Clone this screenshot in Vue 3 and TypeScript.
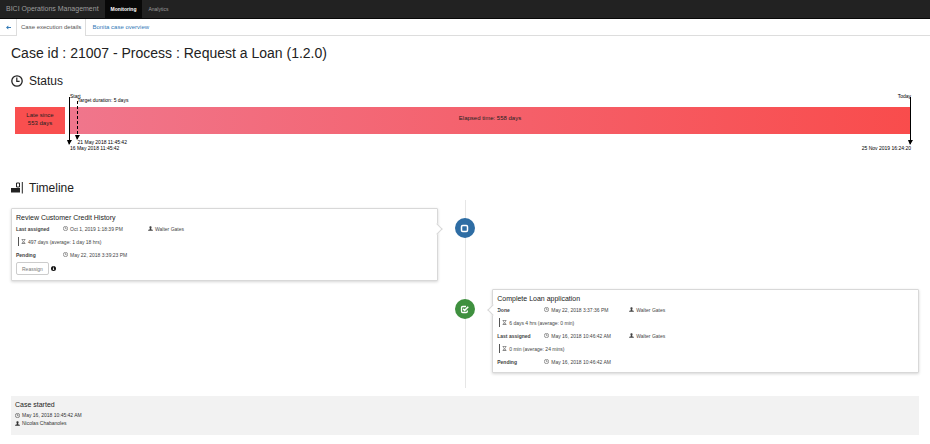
<script setup lang="ts">
import { h, type FunctionalComponent } from 'vue'

interface Step {
  label: string
  date: string
  user?: string
  duration?: string
}
interface Task {
  title: string
  side: 'left' | 'right'
  state: 'open' | 'done'
  steps: Step[]
}

const elapsedDays = 558
const targetDays = 5
const targetLeft = `${(targetDays / elapsedDays) * 100}%`

const tasks: Task[] = [
  {
    title: 'Review Customer Credit History',
    side: 'left',
    state: 'open',
    steps: [
      { label: 'Last assigned', date: 'Oct 1, 2019 1:18:39 PM', user: 'Walter Gates', duration: '497 days (average: 1 day 18 hrs)' },
      { label: 'Pending', date: 'May 22, 2018 3:39:23 PM' },
    ],
  },
  {
    title: 'Complete Loan application',
    side: 'right',
    state: 'done',
    steps: [
      { label: 'Done', date: 'May 22, 2018 3:37:36 PM', user: 'Walter Gates', duration: '6 days 4 hrs (average: 0 min)' },
      { label: 'Last assigned', date: 'May 16, 2018 10:46:42 AM', user: 'Walter Gates', duration: '0 min (average: 24 mins)' },
      { label: 'Pending', date: 'May 16, 2018 10:46:42 AM' },
    ],
  },
]

const ClockIcon: FunctionalComponent = () =>
  h('svg', { viewBox: '0 0 12 12', 'aria-hidden': 'true' }, [
    h('circle', { cx: 6, cy: 6, r: 5.2, fill: 'none', stroke: 'currentColor', 'stroke-width': 1.3 }),
    h('path', { d: 'M5.8 2.6V6.4H8.6', fill: 'none', stroke: 'currentColor', 'stroke-width': 1.2 }),
  ])

const UserIcon: FunctionalComponent = () =>
  h('svg', { viewBox: '0 0 12 12', 'aria-hidden': 'true' }, [
    h('path', {
      d: 'M6 .5C4.2.5 3.2 1.8 3.4 3.6 3.5 4.9 4 5.8 4.6 6.4V7.5L1.2 8.8Q.4 9.2.3 11.5H11.7Q11.6 9.2 10.8 8.8L7.4 7.5V6.4C8 5.8 8.5 4.9 8.6 3.6 8.8 1.8 7.8.5 6 .5Z',
      fill: 'currentColor',
    }),
  ])

const HourglassIcon: FunctionalComponent = () =>
  h('svg', { viewBox: '0 0 12 12', 'aria-hidden': 'true' }, [
    h('path', {
      d: 'M1.5 1H10.5M1.5 11H10.5M3 1C3 4 5.2 5 5.2 6S3 8 3 11M9 1C9 4 6.8 5 6.8 6S9 8 9 11M4 9.5H8',
      fill: 'none',
      stroke: 'currentColor',
      'stroke-width': 1.3,
    }),
  ])
</script>

<template>
  <div class="page">
    <header class="navbar">
      <a class="brand" href="#">BICI Operations Management</a>
      <nav class="menu">
        <a class="menu-item active" href="#">Monitoring</a>
        <a class="menu-item" href="#">Analytics</a>
      </nav>
    </header>

    <nav class="tabs">
      <a class="back" href="#" aria-label="Back">
        <svg viewBox="0 0 12 12" aria-hidden="true">
          <path d="M0 6L5.5 1V4.6H12V7.4H5.5V11Z" fill="currentColor" />
        </svg>
      </a>
      <a class="tab current" href="#">Case execution details</a>
      <a class="tab" href="#">Bonita case overview</a>
    </nav>

    <main class="content">
      <h1>Case id : 21007 - Process : Request a Loan (1.2.0)</h1>

      <h2><ClockIcon class="heading-icon" />Status</h2>
      <section class="chart">
        <div class="late"><span>Late since</span><span>553 days</span></div>
        <div class="elapsed">
          <span>Elapsed time: {{ elapsedDays }} days</span>
          <div class="marker start"><span class="above">Start</span><i class="arrow"></i><span class="below">16 May 2018 11:45:42</span></div>
          <div class="marker target" :style="{ left: targetLeft }"><span class="above">Target duration: 5 days</span><i class="arrow"></i><span class="below">21 May 2018 11:45:42</span></div>
          <div class="marker today"><span class="above">Today</span><i class="arrow"></i><span class="below">25 Nov 2019 16:24:20</span></div>
        </div>
      </section>

      <h2>
        <svg class="heading-icon" viewBox="0 0 12 12" aria-hidden="true">
          <path d="M0 6H9V10.5H0Z" fill="currentColor" />
          <path d="M5.5 1H8.5V5H5.5ZM11.3 0V11.5" fill="none" stroke="currentColor" stroke-width="1" />
        </svg>Timeline
      </h2>
      <section class="timeline">
        <div v-for="task in tasks" :key="task.title" class="entry" :class="task.side">
          <div class="badge" :class="task.state">
            <svg viewBox="0 0 12 12" aria-hidden="true">
              <rect v-if="task.state === 'open'" x="2" y="2" width="8" height="8" rx="1.6" fill="none" stroke="currentColor" stroke-width="2" />
              <template v-else>
                <path d="M8 2H3.6Q2 2 2 3.6V8.4Q2 10 3.6 10H8.2Q9.8 10 9.8 8.4V7.4" fill="none" stroke="currentColor" stroke-width="1.7" />
                <path d="M4.2 5.2L6.2 7.2L11 2.4" fill="none" stroke="currentColor" stroke-width="2" />
              </template>
            </svg>
          </div>
          <article class="card">
            <h3>{{ task.title }}</h3>
            <template v-for="step in task.steps" :key="step.label">
              <div class="step">
                <strong>{{ step.label }}</strong>
                <span class="with-icon"><ClockIcon class="icon" />{{ step.date }}</span>
                <span v-if="step.user" class="with-icon"><UserIcon class="icon" />{{ step.user }}</span>
              </div>
              <div v-if="step.duration" class="duration"><HourglassIcon class="icon" />{{ step.duration }}</div>
            </template>
            <div v-if="task.state === 'open'" class="actions">
              <button type="button">Reassign</button>
              <svg class="icon info" viewBox="0 0 12 12" aria-hidden="true">
                <circle cx="6" cy="6" r="6" fill="currentColor" />
                <path d="M5 2H7V3.6H5ZM4.4 4.8H7V8.6H7.8V9.8H4.4V8.6H5.2V6H4.4Z" fill="#fff" />
              </svg>
            </div>
          </article>
        </div>
      </section>

      <footer class="started">
        <h3>Case started</h3>
        <span class="with-icon"><ClockIcon class="icon" />May 16, 2018 10:45:42 AM</span>
        <span class="with-icon"><UserIcon class="icon" />Nicolas Chabanoles</span>
      </footer>
    </main>
  </div>
</template>

<style>
body {
  margin: 0;
  background: #fff;
}
</style>

<style scoped>
.page {
  font-family: "Liberation Sans", Arial, sans-serif;
  font-size: 5px;
  line-height: 8px;
  color: #333;
}
.page * {
  box-sizing: border-box;
}
a {
  text-decoration: none;
}
.navbar {
  display: flex;
  height: 19px;
  background: #222;
  border-bottom: 1px solid #080808;
  line-height: 18px;
}
.brand {
  padding: 0 6px;
  font-size: 7px;
  color: #9d9d9d;
}
.menu {
  display: flex;
}
.menu-item {
  padding: 0 6px;
  color: #9d9d9d;
}
.menu-item.active {
  background: #080808;
  font-weight: 700;
  color: #fff;
}
.tabs {
  display: flex;
  height: 17px;
  border-bottom: 1px solid #ddd;
  line-height: 17px;
}
.back {
  display: flex;
  align-items: center;
  width: 16px;
  padding-left: 6px;
  color: #337ab7;
}
.back svg {
  width: 5px;
  height: 5px;
}
.tab {
  padding: 0 6px;
  font-size: 6px;
  color: #337ab7;
}
.tab.current {
  height: 17px;
  padding: 0 4px;
  background: #fff;
  border: 1px solid #ddd;
  border-width: 0 1px;
  color: #555;
}
h1, h2, h3 {
  margin: 0;
  font-weight: 400;
  color: #222;
}
.content {
  padding: 8px 11px;
}
h1 {
  font-size: 14px;
  line-height: 18px;
}
h2 {
  display: flex;
  align-items: center;
  gap: 6px;
  margin-top: 12px;
  font-size: 12px;
  line-height: 14px;
}
.heading-icon {
  width: 12px;
  height: 12px;
}
.chart {
  display: flex;
  gap: 4px;
  margin: 19px 8px 47px 4px;
  height: 27px;
  font-size: 6px;
  color: #222;
}
.late {
  display: flex;
  flex-direction: column;
  align-items: center;
  justify-content: center;
  width: 50px;
  padding-bottom: 4px;
  background: #f94f4f;
}
.elapsed {
  position: relative;
  flex: 1;
  padding-top: 7px;
  text-align: center;
  background: linear-gradient(90deg, #f0768c, #f94c4c);
}
.marker {
  position: absolute;
  top: -10px;
  bottom: -10px;
  border-left: 1px solid #000;
  font-size: 5px;
  line-height: 5px;
  white-space: nowrap;
  color: #000;
}
.marker.start {
  left: 0;
}
.marker.target {
  top: -6px;
  bottom: -5px;
  border-left-style: dashed;
}
.marker.today {
  right: 0;
}
.above, .below {
  position: absolute;
  left: 0;
}
.above {
  top: -3px;
}
.below {
  top: 100%;
  margin-top: 2px;
}
.target .below {
  margin-top: 1px;
}
.today .above, .today .below {
  left: auto;
  right: 0;
}
.arrow {
  position: absolute;
  left: -3px;
  bottom: -1px;
  border: solid transparent;
  border-width: 5px 3px 0 2px;
  border-top-color: #000;
}
.timeline {
  position: relative;
  display: flex;
  flex-direction: column;
  gap: 8px;
  margin-top: 5px;
  padding: 8px 0 15px;
}
.timeline::before {
  content: "";
  position: absolute;
  top: 0;
  bottom: 0;
  left: 50%;
  width: 1px;
  background: #e6e6e6;
}
.entry {
  display: grid;
  grid-template-columns: 47fr 6fr 47fr;
}
.badge {
  z-index: 1;
  grid-area: 1 / 2;
  display: flex;
  align-items: center;
  justify-content: center;
  justify-self: center;
  width: 20px;
  height: 20px;
  margin-top: 10px;
  border-radius: 50%;
  color: #fff;
}
.badge.open {
  background: #2e6da4;
}
.badge.done {
  background: #3f903f;
}
.badge svg {
  width: 9px;
  height: 9px;
}
.card {
  position: relative;
  padding: 4px;
  border: 1px solid #d8d8d8;
  border-radius: 1px;
  background: #fff;
  box-shadow: 0 1px 3px rgba(0, 0, 0, 0.17);
  color: #444;
}
.left .card {
  grid-area: 1 / 1;
}
.right .card {
  grid-area: 1 / 3;
}
.card::after {
  content: "";
  position: absolute;
  top: 16px;
  width: 7px;
  height: 7px;
  background: #fff;
  border: 1px solid #d8d8d8;
  transform: rotate(45deg);
}
.left .card::after {
  right: -4px;
  border-width: 1px 1px 0 0;
}
.right .card::after {
  left: -4px;
  border-width: 0 0 1px 1px;
}
h3 {
  font-size: 7px;
  line-height: 9px;
}
.step {
  display: grid;
  grid-template-columns: 47px 85px 1fr;
  align-items: center;
  height: 13px;
}
.with-icon, .duration {
  display: flex;
  align-items: center;
  gap: 2px;
}
.icon {
  width: 5px;
  height: 5px;
  flex: none;
}
.duration {
  height: 9px;
  margin: 2px 0 2px 2px;
  padding-left: 2px;
  border-left: 1px solid #555;
}
.actions {
  display: flex;
  align-items: center;
  gap: 2px;
  margin: 1px 0;
}
.actions button {
  height: 13px;
  padding: 0 5px;
  border: 1px solid #ccc;
  border-radius: 2px;
  background: #fff;
  font: inherit;
  color: #777;
}
.info {
  color: #111;
}
.started {
  margin-top: 8px;
  padding: 4px 4px 8px;
  background: #f2f2f2;
}
.started h3 {
  margin-bottom: 2px;
}
</style>
